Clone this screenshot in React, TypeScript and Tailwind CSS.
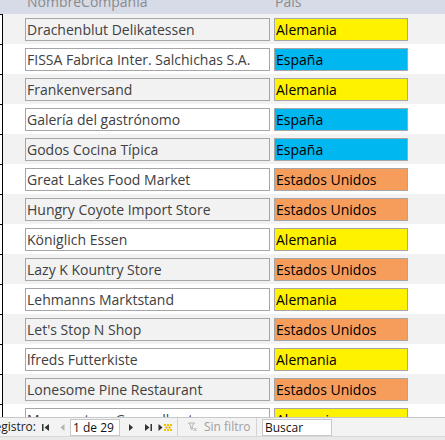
import React from 'react'

type Row = { name: string; country: 'Alemania' | 'España' | 'Estados Unidos' }

const ROWS: Row[] = [
  { name: 'Drachenblut Delikatessen', country: 'Alemania' },
  { name: 'FISSA Fabrica Inter. Salchichas S.A.', country: 'España' },
  { name: 'Frankenversand', country: 'Alemania' },
  { name: 'Galería del gastrónomo', country: 'España' },
  { name: 'Godos Cocina Típica', country: 'España' },
  { name: 'Great Lakes Food Market', country: 'Estados Unidos' },
  { name: 'Hungry Coyote Import Store', country: 'Estados Unidos' },
  { name: 'Königlich Essen', country: 'Alemania' },
  { name: 'Lazy K Kountry Store', country: 'Estados Unidos' },
  { name: 'Lehmanns Marktstand', country: 'Alemania' },
  { name: "Let's Stop N Shop", country: 'Estados Unidos' },
  { name: 'lfreds Futterkiste', country: 'Alemania' },
  { name: 'Lonesome Pine Restaurant', country: 'Estados Unidos' },
  { name: 'Morgenstern Gesundkost', country: 'Alemania' },
]

const COUNTRY_BG: Record<Row['country'], string> = {
  Alemania: 'bg-[#fff200]',
  España: 'bg-[#00b7ef]',
  'Estados Unidos': 'bg-[#f79d5b]',
}

function RecordRow({ row, index }: { row: Row; index: number }) {
  const shaded = index % 2 === 0
  return (
    <div className={`flex h-[30px] shrink-0 ${shaded ? 'bg-[#f2f2f2]' : 'bg-white'}`}>
      {/* record selector, scrolled mostly out of view */}
      <div className="w-[3px] h-full border-t border-r border-black bg-white" />
      <div className="flex pt-[4px] pl-[22px] gap-[4px]">
        <div className="w-[245px] h-[23px] border border-[#a6a6a6] px-[1px] pt-[1px] text-[#404040] leading-[20px] whitespace-nowrap overflow-hidden">
          {row.name}
        </div>
        <div className={`w-[134px] h-[23px] border border-[#a6a6a6] px-[1px] pt-[1px] text-black leading-[20px] whitespace-nowrap overflow-hidden ${COUNTRY_BG[row.country]}`}>
          {row.country}
        </div>
      </div>
    </div>
  )
}

function NavBar() {
  return (
    <div className="h-[23px] shrink-0 border-t border-[#c8c8c8] bg-[#f3f3f3] flex flex-col text-[12px]">
      <div className="h-[18px] flex items-center">
        <div className="w-[36px] overflow-hidden flex justify-end shrink-0">
          <span className="text-[#222] whitespace-nowrap">Registro:</span>
        </div>
        {/* first */}
        <svg width="7" height="9" viewBox="0 0 7 9" className="ml-[6px] shrink-0">
          <rect x="0" y="1" width="1.5" height="7" fill="#333" />
          <path d="M7 1 L2.5 4.5 L7 8 Z" fill="#333" />
        </svg>
        {/* prev, disabled */}
        <svg width="5" height="9" viewBox="0 0 5 9" className="ml-[11px] shrink-0">
          <path d="M4.5 1 L0.5 4.5 L4.5 8 Z" fill="#b4b4b4" />
        </svg>
        <div className="ml-[5px] w-[50px] h-[17px] shrink-0 bg-white border border-[#c8c8c8] pl-[2px] leading-[15px] text-[#111]">
          1 de 29
        </div>
        {/* next */}
        <svg width="6" height="9" viewBox="0 0 6 9" className="ml-[8px] shrink-0">
          <path d="M1 1 L5 4.5 L1 8 Z" fill="#333" />
        </svg>
        {/* last */}
        <svg width="7" height="9" viewBox="0 0 7 9" className="ml-[11px] shrink-0">
          <path d="M0 1 L4.5 4.5 L0 8 Z" fill="#333" />
          <rect x="5.5" y="1" width="1.5" height="7" fill="#333" />
        </svg>
        {/* new */}
        <svg width="14" height="9" viewBox="0 0 14 9" className="ml-[6px] shrink-0">
          <path d="M0.5 1 L4.5 4.5 L0.5 8 Z" fill="#333" />
          <rect x="6" y="1" width="2" height="2" fill="#f2c200" />
          <rect x="9" y="1" width="2" height="2" fill="#f2c200" />
          <rect x="12" y="1" width="2" height="2" fill="#f2c200" />
          <rect x="7.5" y="3.5" width="2" height="2" fill="#e6a800" />
          <rect x="10.5" y="3.5" width="2" height="2" fill="#e6a800" />
          <rect x="6" y="6" width="2" height="2" fill="#f2c200" />
          <rect x="9" y="6" width="2" height="2" fill="#f2c200" />
          <rect x="12" y="6" width="2" height="2" fill="#f2c200" />
        </svg>
        <div className="ml-[5px] w-px h-[18px] bg-[#d4d4d4] shrink-0" />
        {/* filter */}
        <svg width="9" height="10" viewBox="0 0 9 10" className="ml-[10px] shrink-0">
          <path d="M0.5 1 H6.5 L4.2 3.8 V7.5 L2.8 6.8 V3.8 Z" fill="none" stroke="#b0b0b0" strokeWidth="1" />
          <path d="M5.5 6 L8.5 9 M8.5 6 L5.5 9" stroke="#b0b0b0" strokeWidth="1" />
        </svg>
        <span className="ml-[7px] w-[52px] shrink-0 text-[#a0a0a0] whitespace-nowrap">Sin filtro</span>
        <div className="w-px h-[18px] bg-[#d4d4d4] shrink-0" />
        <div className="ml-[5px] w-[70px] h-[17px] shrink-0 bg-white border border-[#c8c8c8] pl-[2px] leading-[15px] text-[#111]">
          Buscar
        </div>
      </div>
      <div className="flex-1 border-t border-[#d8d8d8] bg-[#e9e9e9]" />
    </div>
  )
}

export default function App() {
  return (
    <div
      className="w-[445px] h-[440px] flex flex-col overflow-hidden bg-white text-[14px]"
      style={{ fontFamily: '"Open Sans", "Noto Sans", sans-serif' }}
    >
      <div className="h-[14px] shrink-0 bg-[#d6dbe7] overflow-hidden text-[#8a8a8a]">
        <div className="flex leading-[14px] -mt-[5px]">
          <span className="ml-[27px] w-[248px]">NombreCompañía</span>
          <span>País</span>
        </div>
      </div>
      <div className="flex-1 flex flex-col overflow-hidden">
        {ROWS.map((r, i) => (
          <RecordRow key={r.name} row={r} index={i} />
        ))}
      </div>
      <NavBar />
    </div>
  )
}
